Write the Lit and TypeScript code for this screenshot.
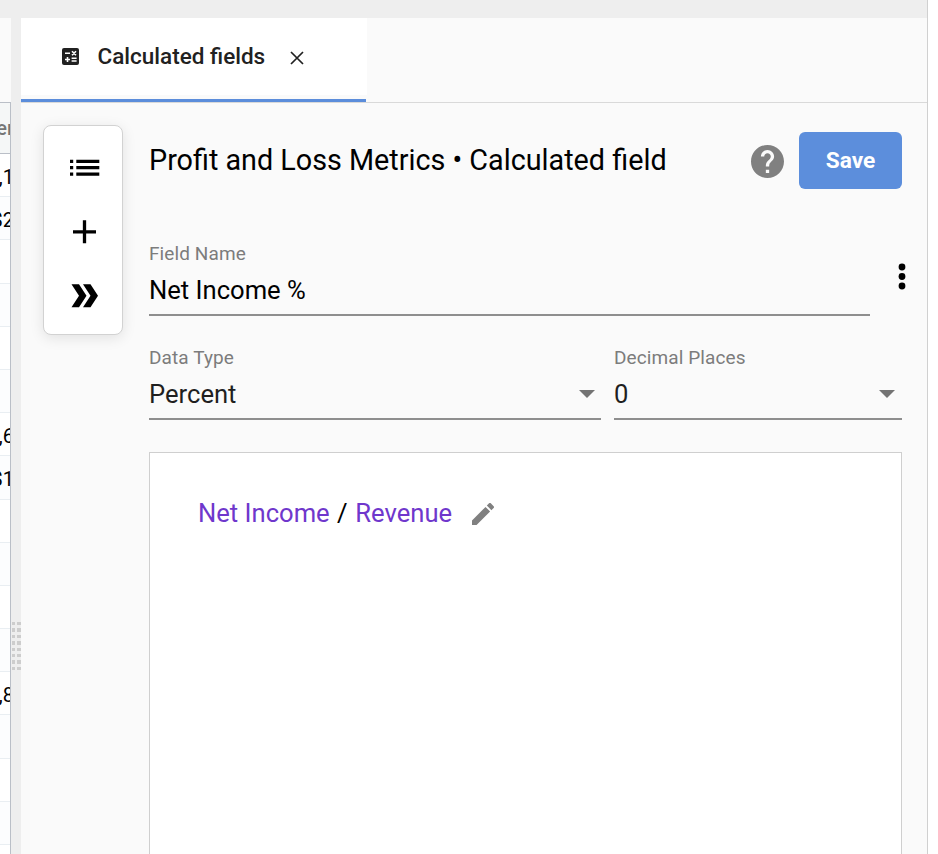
import { LitElement, html, css } from "lit";
import { customElement } from "lit/decorators.js";

const ROWS = [",1", "$2", "", "", "", "", ",6", "$1", "", "", "", "", ",8", "", "", "", ""];

@customElement("grid-strip")
class GridStrip extends LitElement {
  static styles = css`
    :host { display: block; flex: none; width: 11px; height: 836px; overflow: hidden; background: #fff;
      font-family: Roboto, sans-serif; }
    .gap { height: 84px; background: #fafafa; }
    .frame { height: 752px; border-right: 1px solid #babfc7; overflow: hidden; }
    .head, .row { display: flex; align-items: center; justify-content: flex-end; box-sizing: border-box; width: 14px; white-space: nowrap; }
    .head { height: 52px; background: #f5f7f7; border-top: 1px solid #babfc7; border-bottom: 1px solid #babfc7;
      font-size: 20px; font-weight: 500; color: #757676; }
    .row { height: 43.2px; padding-top: 3px; border-bottom: 1px solid #e9eef2; font-size: 20px; color: #000; }
    .row:nth-child(even) { background: #fcfdfe; }
  `;
  render() {
    return html`<div class="gap"></div><div class="frame"><div class="head">er</div>
      <div>${ROWS.map((r) => html`<div class="row">${r}</div>`)}</div></div>`;
  }
}

@customElement("select-field")
class SelectField extends LitElement {
  static properties = { label: {}, value: {}, menu: { type: Boolean } };
  declare label: string;
  declare value: string;
  declare menu: boolean;
  static styles = css`
    :host { display: block; flex: none; font-family: Roboto, sans-serif; }
    .label { font-size: 19px; line-height: 24px; color: #7c7c7c; letter-spacing: 0.1px; }
    .line { display: flex; align-items: center; justify-content: space-between; height: 50px; box-sizing: border-box;
      border-bottom: 2px solid #8e8e8e; padding: 0 var(--arrow-inset, 6px) 0 0; font-size: 25.6px; color: #000; }
    .line.menu { color: #1f1f1f; }
    svg { display: block; }
  `;
  render() {
    return html`<div class="label">${this.label}</div>
      <div class="line ${this.menu ? "menu" : ""}"><span>${this.value}</span>
        ${this.menu ? html`<svg width="16" height="8" viewBox="0 0 16 8"><path fill="#737373" d="M0 0h16l-8 8z"/></svg>` : ""}
      </div>`;
  }
}

@customElement("app-root")
class AppRoot extends LitElement {
  static styles = css`
    :host { display: block; width: 938px; height: 854px; overflow: hidden; background: #fff; font-family: Roboto, sans-serif; }
    * { box-sizing: border-box; }
    svg { display: block; flex: none; }
    .window { width: 928px; height: 854px; background: #eee; border-right: 1px solid #d0d0d0; padding-top: 18px; display: flex; }
    .splitter { flex: none; width: 10px; height: 836px; padding: 604px 0 0 1px; display: grid; grid-template-columns: 3px 4px;
      grid-auto-rows: 3.4px; gap: 3px 1.5px; align-content: start; }
    .splitter i { background: #cdcdcd; }
    .panel { flex: none; width: 906px; height: 836px; background: #fafafa; }
    .tabs { height: 85px; border-bottom: 1px solid #d9d9d9; }
    .tabwrap { height: 84px; width: 345px; border-bottom: 3px solid #5b8ddb; }
    .tab { width: 346px; height: 77px; display: flex; align-items: center; background: #fff; padding: 0 0 0 41px; }
    .calc { margin-bottom: 1px; }
    .name { font-size: 22.5px; font-weight: 500; color: #212121; margin-left: 18.5px; width: 192px; white-space: nowrap; padding-bottom: 2px; }
    .close { margin-top: 2px; }
    .body { display: flex; padding: 22px 0 0 22px; }
    .tools { flex: none; width: 80px; height: 210px; background: #fff; border: 1px solid #d2d2d2; border-radius: 8px;
      box-shadow: 0 3px 14px rgba(0,0,0,.1); display: flex; flex-direction: column; align-items: center;
      padding: 26px 0 0 1px; gap: 32px; }
    .main { flex: none; margin-left: 26px; width: 753px; }
    .header { display: flex; align-items: center; padding-top: 7px; height: 64px; }
    h1 { margin: 0; font-size: 28.75px; font-weight: 400; color: #000; width: 602px; white-space: nowrap; line-height: 32px; padding-bottom: 2px; }
    .help { margin-top: 2px; }
    .save { width: 103px; height: 57px; border: 0; border-radius: 6px; background: #5c8edc; color: #fff; font: 700 22.7px Roboto, sans-serif;
      margin-left: 15px; padding: 0; }
    .namerow { display: flex; margin-top: 53px; height: 104px; }
    .namerow select-field { width: 721px; }
    .more { margin: 21px 0 0 27.6px; }
    .pair { display: grid; grid-template-columns: 452px 288px; gap: 13px; }
    .places { --arrow-inset: 7px; }
    .editor { margin-top: 32px; height: 420px; border: 1px solid #cfcfcf; background: #fff; padding: 43px 48px; }
    .formula { display: flex; align-items: center; font-size: 25.6px; line-height: 34px; color: #000; white-space: pre; }
    .ref { color: #6f37cc; }
    .op { margin: 0 1.4px 0 1px; }
    .edit { margin: 2px 0 0 20px; }
  `;
  render() {
    return html`<div class="window">
      <grid-strip></grid-strip>
      <div class="splitter">${Array.from({ length: 16 }, () => html`<i></i>`)}</div>
      <div class="panel">
        <div class="tabs"><div class="tabwrap"><div class="tab">
          <svg class="calc" width="17" height="17" viewBox="0 0 17 17"><rect width="17" height="17" rx="2" fill="#212121"/>
            <path d="M3 5.200h5M10 3.200l4 4M14 3.200l-4 4M3 11.500h5M5.500 9v5M9.600 10.200h5M9.600 13h5" stroke="#fff" stroke-width="1.600" fill="none"/></svg>
          <span class="name">Calculated fields</span>
          <svg class="close" width="14" height="14" viewBox="0 0 14 14"><path d="M1 1l12 12M13 1L1 13" stroke="#212121" stroke-width="1.700"/></svg>
        </div></div></div>
        <div class="body">
          <div class="tools">
            <svg width="32" height="32" viewBox="0 0 32 32"><path d="M2 7.700h3.200v3.300H2zM8.300 7.700h23v3.300h-23zM2 14h3.200v3.300H2zM8.300 14h23v3.300h-23zM2 20.400h3.200v3.300H2zM8.300 20.400h23v3.300h-23z"/></svg>
            <svg width="32" height="32" viewBox="0 0 32 32"><path d="M16.500 4.300v23M5 15.800h23" stroke="#000" stroke-width="3.300"/></svg>
            <svg width="32" height="32" viewBox="0 0 32 32"><path d="M3.500 4.300h7.500l7.500 11.500-7.500 11.500H3.500L11 15.800zM15 4.300h7.500L30 15.800l-7.500 11.500H15L22.500 15.800z"/></svg>
          </div>
          <div class="main">
            <div class="header">
              <h1>Profit and Loss Metrics • Calculated field</h1>
              <svg class="help" width="33" height="33" viewBox="2 2 20 20"><path fill="#808080" d="M12 2C6.480 2 2 6.480 2 12s4.480 10 10 10 10-4.480 10-10S17.520 2 12 2zm1 17h-2v-2h2v2zm2.070-7.750l-.9.920C13.450 12.900 13 13.500 13 15h-2v-.5c0-1.100.45-2.100 1.170-2.830l1.240-1.260c.37-.36.59-.86.59-1.410 0-1.100-.9-2-2-2s-2 .9-2 2H8c0-2.210 1.790-4 4-4s4 1.790 4 4c0 .88-.36 1.680-.93 2.250z"/></svg>
              <button class="save">Save</button>
            </div>
            <div class="namerow">
              <select-field label="Field Name" value="Net Income %"></select-field>
              <svg class="more" width="8" height="27" viewBox="0 0 8 27"><circle cx="4" cy="4" r="3.400"/><circle cx="4" cy="13.500" r="3.400"/><circle cx="4" cy="23" r="3.400"/></svg>
            </div>
            <div class="pair">
              <select-field label="Data Type" value="Percent" menu></select-field>
              <select-field class="places" label="Decimal Places" value="0" menu></select-field>
            </div>
            <div class="editor"><div class="formula"><span class="ref">Net Income</span><span class="op"> / </span><span class="ref">Revenue</span>
              <svg class="edit" width="22" height="22" viewBox="3 3 18 18"><path fill="#808080" d="M3 17.250V21h3.750L17.810 9.940l-3.750-3.750L3 17.250zM20.710 7.040c.39-.39.39-1.020 0-1.410l-2.340-2.340c-.39-.39-1.020-.39-1.410 0l-1.830 1.830 3.750 3.750 1.830-1.830z"/></svg>
            </div></div>
          </div>
        </div>
      </div>
    </div>`;
  }
}
